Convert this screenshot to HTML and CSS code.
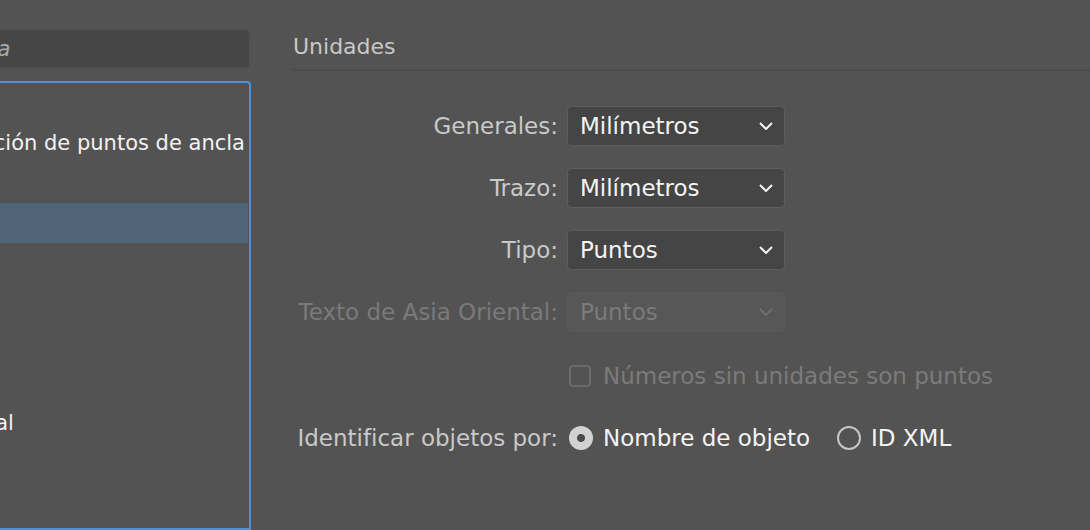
FILE: index.html
```html
<!DOCTYPE html>
<html lang="es">
<head>
<meta charset="utf-8">
<title>Preferencias - Unidades</title>
<link rel="stylesheet" href="styles.css">
</head>
<body>
<aside class="sidebar">
  <div class="search">
    <svg class="search-icon" width="18" height="18" viewBox="0 0 18 18"><circle cx="7.5" cy="7.5" r="5.5"/><line x1="11.5" y1="11.5" x2="16" y2="16"/></svg>
    <span class="search-text">Buscar en la ayuda</span>
  </div>
  <ul class="list">
    <li class="item">General</li>
    <li class="item">Selección y visualización de puntos de ancla</li>
    <li class="item">Texto</li>
    <li class="item selected">Unidades</li>
    <li class="item">Guías y cuadrícula</li>
    <li class="item">Guías inteligentes</li>
    <li class="item">Sectores</li>
    <li class="item">Diccionario</li>
    <li class="item">Plug-ins y disco virtual</li>
    <li class="item">Interfaz de usuario</li>
    <li class="item">Rendimiento</li>
  </ul>
</aside>
<main class="main">
  <h2 class="heading">Unidades</h2>
  <div class="form">
    <div class="label">Generales:</div>
    <div class="select"><span>Milímetros</span><svg class="chev" width="14" height="8" viewBox="0 0 14 8"><polyline points="1,1 7,7 13,1"/></svg></div>

    <div class="label">Trazo:</div>
    <div class="select"><span>Milímetros</span><svg class="chev" width="14" height="8" viewBox="0 0 14 8"><polyline points="1,1 7,7 13,1"/></svg></div>

    <div class="label">Tipo:</div>
    <div class="select"><span>Puntos</span><svg class="chev" width="14" height="8" viewBox="0 0 14 8"><polyline points="1,1 7,7 13,1"/></svg></div>

    <div class="label disabled">Texto de Asia Oriental:</div>
    <div class="select is-disabled"><span>Puntos</span><svg class="chev" width="14" height="8" viewBox="0 0 14 8"><polyline points="1,1 7,7 13,1"/></svg></div>

    <div class="label empty"></div>
    <div class="check-row"><span class="checkbox"></span><span class="check-label">Números sin unidades son puntos</span></div>

    <div class="label lower">Identificar objetos por:</div>
    <div class="radio-row">
      <span class="radio on"></span><span class="radio-label">Nombre de objeto</span>
      <span class="radio off"></span><span class="radio-label">ID XML</span>
    </div>
  </div>
</main>
</body>
</html>
```
FILE: styles.css
```css
* { box-sizing: border-box; }
html, body { margin: 0; padding: 0; }
body {
  width: 1090px;
  height: 530px;
  overflow: hidden;
  background: #535353;
  display: flex;
  font-family: "DejaVu Sans", sans-serif;
  font-size: 23px;
}
.sidebar {
  flex: none;
  width: 491px;
  margin-left: -240px;
  padding-top: 29px;
  display: flex;
  flex-direction: column;
}
.search {
  width: 490px;
  height: 41px;
  background: #464646;
  border: 1px solid #4f4f4f;
  border-radius: 4px;
  display: flex;
  align-items: center;
  padding-left: 14px;
  gap: 16px;
  overflow: hidden;
}
.search-icon { flex: none; fill: none; stroke: #a9a9a9; stroke-width: 1.6; }
.search-text {
  font-size: 21px;
  font-style: italic;
  color: #a9a9a9;
  white-space: nowrap;
}
.list {
  list-style: none;
  margin: 13px 0 0 0;
  padding: 0;
  height: 470px;
  border: 2px solid #4a92de;
  border-radius: 4px 4px 0 0;
  overflow: hidden;
}
.item {
  height: 40px;
  line-height: 40px;
  font-size: 21px;
  color: #f2f2f2;
  white-space: nowrap;
  padding-left: 15px;
}
.item.selected { background: #506478; margin-right: 1px; }
.main {
  flex: 1;
  padding: 30px 0 0 42px;
}
.heading {
  margin: 0;
  font-size: 22px;
  font-weight: normal;
  color: #c8c8c8;
  line-height: 34px;
  padding-bottom: 5px;
  border-bottom: 2px solid #4a4a4a;
}
.form {
  margin-top: 35px;
  display: grid;
  grid-template-columns: 265px auto;
  grid-auto-rows: 40px;
  column-gap: 9px;
  row-gap: 22px;
  align-items: center;
}
.label {
  text-align: right;
  color: #c9c9c9;
  white-space: nowrap;
}
.label.disabled { color: #7a7a7a; }
.label.lower { padding-top: 4px; }
.select {
  width: 218px;
  height: 40px;
  background: #454545;
  border: 1px solid #5d5d5d;
  border-radius: 4px;
  display: flex;
  align-items: center;
  justify-content: space-between;
  padding: 0 11px 0 12px;
  color: #f4f4f4;
}
.chev { fill: none; stroke: #f4f4f4; stroke-width: 2; }
.select.is-disabled {
  background: #575757;
  border-color: #595959;
  color: #7b7b7b;
}
.select.is-disabled .chev { stroke: #6e6e6e; }
.check-row, .radio-row {
  display: flex;
  align-items: center;
  padding-top: 4px;
  white-space: nowrap;
}
.checkbox {
  width: 22px;
  height: 22px;
  margin-left: 2px;
  border: 2px solid #6a6a6a;
  border-radius: 4px;
  margin-right: 12px;
}
.check-label { color: #7b7b7b; }
.radio {
  width: 24px;
  height: 24px;
  border-radius: 50%;
  margin-left: 2px;
  margin-right: 10px;
}
.radio.on {
  background: radial-gradient(circle, #4a4a4a 0 3.5px, #d2d2d2 4.5px);
}
.radio.off {
  border: 2px solid #c6c6c6;
  margin-left: 27px;
}
.radio-label { color: #f4f4f4; }
```
